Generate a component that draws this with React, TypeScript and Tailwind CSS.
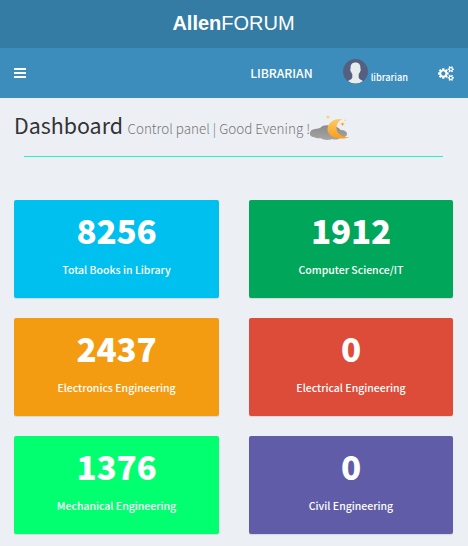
const cards = [
  { value: "8256", label: "Total Books in Library", color: "bg-[#00c0ef]" },
  { value: "1912", label: "Computer Science/IT", color: "bg-[#00a65a]" },
  { value: "2437", label: "Electronics Engineering", color: "bg-[#f39c12]" },
  { value: "0", label: "Electrical Engineering", color: "bg-[#dd4b39]" },
  { value: "1376", label: "Mechanical Engineering", color: "bg-[#01ff70]" },
  { value: "0", label: "Civil Engineering", color: "bg-[#605ca8]" },
];

function Gears() {
  return (
    <svg viewBox="0 0 1920 1792" className="h-[15px] w-[16px]" fill="#fff">
      <path d="M896 896q0-106-75-181t-181-75-181 75-75 181 75 181 181 75 181-75 75-181zm768 512q0-52-38-90t-90-38-90 38-38 90q0 53 37.500 90.500t90.500 37.500 90.500-37.500 37.500-90.500zm0-1024q0-52-38-90t-90-38-90 38-38 90q0 53 37.500 90.500t90.500 37.500 90.500-37.500 37.500-90.500zm-384 421v185q0 10-7 19.500t-16 10.500l-155 24q-11 35-32 76 34 48 90 115 7 11 7 20 0 12-7 19-23 30-82.500 89.500t-78.500 59.500q-11 0-21-7l-115-90q-37 19-77 31-11 108-23 155-7 24-30 24h-186q-11 0-20-7.500t-10-17.500l-23-153q-34-10-75-31l-118 89q-7 7-20 7-11 0-21-8-144-133-144-160 0-9 7-19 10-14 41-53t47-61q-23-44-35-82l-152-24q-10-1-17-9.500t-7-19.500v-185q0-10 7-19.500t16-10.500l155-24q11-35 32-76-34-48-90-115-7-11-7-20 0-12 7-20 22-30 82-89t79-59q11 0 21 7l115 90q34-18 77-32 11-108 23-154 7-24 30-24h186q11 0 20 7.500t10 17.500l23 153q34 10 75 31l118-89q8-7 20-7 11 0 21 8 144 133 144 160 0 8-7 19-12 16-42 54t-45 60q23 48 34 82l152 23q10 2 17 10.500t7 19.500zm640 533v140q0 16-149 31-12 27-30 52 51 113 51 138 0 4-4 7-122 71-124 71-8 0-46-47t-52-68q-20 2-30 2t-30-2q-14 21-52 68t-46 47q-2 0-124-71-4-3-4-7 0-25 51-138-18-25-30-52-149-15-149-31v-140q0-16 149-31 13-29 30-52-51-113-51-138 0-4 4-7 4-2 35-20t59-34 30-16q8 0 46 46.500t52 67.500q20-2 30-2t30 2q51-71 92-112l6-2q4 0 124 70 4 3 4 7 0 25-51 138 17 23 30 52 149 15 149 31zm0-1024v140q0 16-149 31-12 27-30 52 51 113 51 138 0 4-4 7-122 71-124 71-8 0-46-47t-52-68q-20 2-30 2t-30-2q-14 21-52 68t-46 47q-2 0-124-71-4-3-4-7 0-25 51-138-18-25-30-52-149-15-149-31v-140q0-16 149-31 13-29 30-52-51-113-51-138 0-4 4-7 4-2 35-20t59-34 30-16q8 0 46 46.500t52 67.500q20-2 30-2t30 2q51-71 92-112l6-2q4 0 124 70 4 3 4 7 0 25-51 138 17 23 30 52 149 15 149 31z" />
    </svg>
  );
}

function Avatar() {
  return (
    <svg viewBox="0 0 25 25" className="h-[25px] w-[25px]">
      <circle cx="12.5" cy="12.5" r="12.5" fill="#556080" />
      <path
        d="M12.5 3.6c3.700 0 5 2.300 4.900 5.200 0 1.200.3 1.300.3 2.100 0 1-.6 1.400-.8 2-.3 1-.8 1.700-1.200 2.200v3.300c0 1.500 2.800 2.300 4.300 3.700A12.500 12.500 0 0 1 5 22.100c1.500-1.400 4.300-2.200 4.300-3.700v-3.300c-.4-.5-.9-1.200-1.200-2.200-.2-.6-.8-1-.8-2 0-.8.3-.9.3-2.100-.1-2.900 1.200-5.200 4.900-5.200z"
        fill="#e7eced"
      />
    </svg>
  );
}

function NightCloud() {
  return (
    <svg viewBox="0 0 42 28" className="h-[28px] w-[42px]">
      <defs>
        <linearGradient id="cloud" x1="0" y1="0" x2="0" y2="1">
          <stop offset="0" stopColor="#8c8a8a" />
          <stop offset="1" stopColor="#a8a4a4" />
        </linearGradient>
        <linearGradient id="moon" x1="0" y1="0" x2="0" y2="1">
          <stop offset="0" stopColor="#fccb63" />
          <stop offset="1" stopColor="#f99d1c" />
        </linearGradient>
      </defs>
      <path
        d="M4.500 14.500C6 13.500 8.500 14 11 13c2-2.500 6-3 9-2.500 6 0 10 2 11.500 4.500 3.500 0 6.500 1.500 6.500 4s-3 4-6.500 3.500c-2 2.500-6 2.500-8.500 1.500-3 1.500-9 1-11-.8-3 .3-6-.2-7-1.200-3 0-4.500-2-4-4 .4-1.900 1-2.900 3-3.500z"
        fill="url(#cloud)"
      />
      <path d="M33 4.200C25 3 18.500 8.500 18.500 14c0 5.500 5.500 9.700 14 9.500 3 0 5.500 0 7.500-1.200h-3.500C31 20.500 27.500 17.500 27.500 13c0-4 2-7 5.500-8.800z" fill="url(#moon)" />
      <path d="M19 .2l.8 1.400 1.900.500-1.900.500-.8 1.400-.8-1.400-1.900-.5 1.900-.5z" fill="#fccb63" />
      <path d="M33.500 7.400l.8 1.200 1.500.500-1.500.500-.8 1.400-.8-1.400-1.500-.5 1.500-.5z" fill="#f99d1c" />
      <circle cx="36.200" cy="5.200" r=".8" fill="#fccb63" />
    </svg>
  );
}

export default function App() {
  return (
    <div className="h-[546px] w-[468px] overflow-hidden bg-[#ecf0f5] font-['Noto_Sans_CJK_SC',sans-serif] text-white">
      <div className="flex h-12 items-center justify-center bg-[#357ca5] pb-[2px] font-['Liberation_Sans',sans-serif] text-[20px] leading-[30px]">
        <span className="-ml-px">
          <b>Allen</b>FORUM
        </span>
      </div>
      <nav className="flex h-[50px] items-center bg-[#3c8dbc] px-[14px]">
        <svg viewBox="0 0 12 10" className="h-[10px] w-[12px]" fill="#fff">
          <path d="M0 0h12v2H0zM0 4h12v2H0zM0 8h12v2H0z" />
        </svg>
        <span className="ml-auto text-[12.200px] font-medium leading-5">LIBRARIAN</span>
        <span className="ml-[30px] flex h-[25px] items-start">
          <span className="-mt-[2px]">
            <Avatar />
          </span>
          <span className="ml-[3px] mt-[7px] text-[9.200px] font-medium leading-[18px]">librarian</span>
        </span>
        <span className="ml-[30px]">
          <Gears />
        </span>
      </nav>
      <header className="flex h-[58px] items-start pl-[14px] pt-[12px]">
        <h1 className="text-[21.400px] leading-[30px] text-[#333]">Dashboard</h1>
        <span className="ml-[4.500px] mt-[8px] text-[13.450px] font-light leading-5 text-[#777]">
          Control panel | Good Evening !
        </span>
        <span className="-ml-px mt-[5px]">
          <NightCloud />
        </span>
      </header>
      <div className="ml-[24px] h-px w-[419px] bg-[#2ef0c8]" />
      <main className="mt-[43px] grid grid-cols-[205px_204px] gap-x-[30px] gap-y-5 pl-[14px]">
        {cards.map((card) => (
          <section
            key={card.label}
            className={`flex h-[98px] flex-col items-center rounded-[2px] shadow-[0_1px_1px_rgba(0,0,0,0.1)] ${card.color}`}
          >
            <strong className="mt-[9px] text-[33.200px] font-black leading-[42px] tracking-[-0.2px]">{card.value}</strong>
            <span className="mt-[9px] text-[10.500px] font-medium leading-5">{card.label}</span>
          </section>
        ))}
      </main>
    </div>
  );
}
